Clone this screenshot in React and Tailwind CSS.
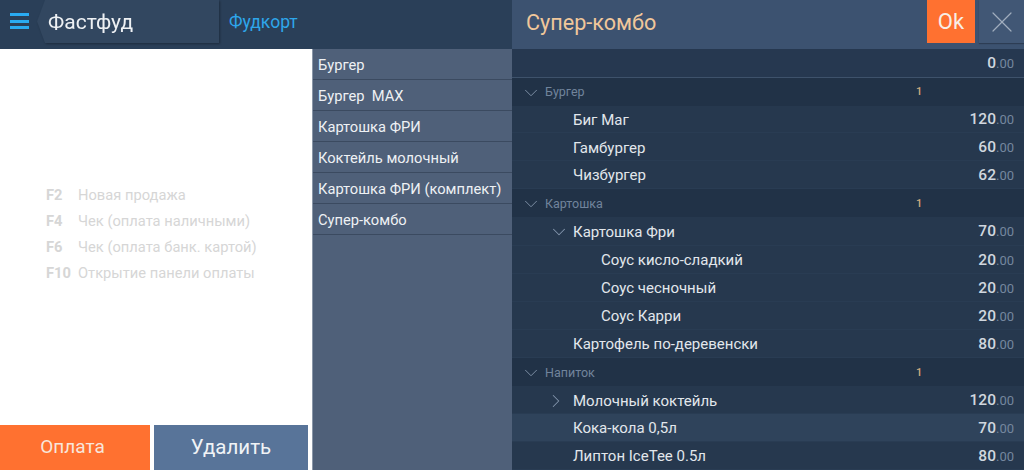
import { ChevronDown, ChevronRight, X } from 'lucide-react';

const categories = ['Бургер', 'Бургер  MAX', 'Картошка ФРИ', 'Коктейль молочный', 'Картошка ФРИ (комплект)', 'Супер-комбо'];

const hints = [
  ['F2', 'Новая продажа'],
  ['F4', 'Чек (оплата наличными)'],
  ['F6', 'Чек (оплата банк. картой)'],
  ['F10', 'Открытие панели оплаты'],
];

const rows = [
  { group: 'Бургер' },
  { name: 'Биг Маг', price: '120' },
  { name: 'Гамбургер', price: '60' },
  { name: 'Чизбургер', price: '62' },
  { group: 'Картошка' },
  { name: 'Картошка Фри', price: '70', icon: 'down', tall: true },
  { name: 'Соус кисло-сладкий', price: '20', sub: true },
  { name: 'Соус чесночный', price: '20', sub: true },
  { name: 'Соус Карри', price: '20', sub: true },
  { name: 'Картофель по-деревенски', price: '80', tall: true },
  { group: 'Напиток' },
  { name: 'Молочный коктейль', price: '120', icon: 'right' },
  { name: 'Кока-кола 0,5л', price: '70', active: true },
  { name: 'Липтон IceTee 0.5л', price: '80' },
];

const Price = ({ value }) => (
  <span className="ml-auto pr-[10px] text-[15.5px] font-medium text-[#d0d7df]">
    {value}
    <span className="text-[13px] font-normal text-[#75879e]">.00</span>
  </span>
);

const Row = ({ row }) => {
  if (row.group) {
    return (
      <div className="flex h-7 items-center bg-[#213247] pt-[2px] text-[12.5px] text-[#71849c]">
        <ChevronDown size={22} strokeWidth={1} className="ml-2 text-[#8395ab]" />
        <span className="ml-[3px] w-[371px]">{row.group}</span>
        <span className="text-[11px] font-medium text-[#d2ab7f]">1</span>
      </div>
    );
  }
  return (
    <div className={`flex items-center border-b border-[#293c53] pt-[2px] text-[15px] font-normal text-[#e2e7ec] ${row.tall ? 'h-[29px]' : 'h-7'} ${row.active ? 'bg-[#2f435b]' : 'bg-[#26384e]'}`}>
      {row.icon === 'down' && (
        <>
          <ChevronDown size={22} strokeWidth={1.1} className="ml-9 text-[#8395ab]" />
          <span className="ml-[3px]">{row.name}</span>
        </>
      )}
      {row.icon === 'right' && (
        <>
          <ChevronRight size={22} strokeWidth={1.1} className="ml-[33px] text-[#8395ab]" />
          <span className="ml-[6px]">{row.name}</span>
        </>
      )}
      {!row.icon && <span className={row.sub ? 'ml-[89px]' : 'ml-[61px]'}>{row.name}</span>}
      <Price value={row.price} />
    </div>
  );
};

export default function App() {
  return (
    <div className="flex h-[470px] w-[1024px] overflow-hidden bg-white font-['Roboto',sans-serif]">
      <div className="flex w-[512px] flex-col">
        <header className="flex h-[49px] bg-[#2a3f58]">
          <div className="ml-[10px] mt-[13px] flex h-[16px] w-[19px] flex-col justify-between">
            <span className="h-[3px] bg-[#29abf2]" />
            <span className="h-[3px] bg-[#29abf2]" />
            <span className="h-[3px] bg-[#29abf2]" />
          </div>
          <div className="ml-[8px] h-[43px] w-[182px] drop-shadow-[1px_1px_1px_rgba(0,0,0,0.3)]">
            <div className="flex h-full items-center bg-[#324760] pl-[11px] pt-[2px] text-[21px] text-[#eef1f4] [clip-path:polygon(8px_0,100%_0,100%_100%,8px_100%,0_50%)]">
              Фастфуд
            </div>
          </div>
          <div className="ml-[10px] flex h-[43px] items-center pt-px text-[17.5px] text-[#2ea6ea]">Фудкорт</div>
        </header>
        <div className="flex min-h-0 flex-1">
          <div className="flex w-[312px] flex-col bg-white">
            <div className="flex flex-1 flex-col pl-[46px] pt-[133px] text-[14.7px] text-[#d6d6d6]">
              {hints.map(([key, label]) => (
                <div key={key} className="flex h-[26px] items-center">
                  <span className="w-8 font-bold">{key}</span>
                  <span>{label}</span>
                </div>
              ))}
            </div>
            <div className="flex h-[45px] gap-1 pr-1">
              <button className="w-[150px] bg-[#ff7130] pr-[5px] text-[19px] text-[#f8e6da]">Оплата</button>
              <button className="w-[154px] bg-[#587499] text-[20.5px] text-[#f0f3f6]">Удалить</button>
            </div>
          </div>
          <nav className="w-[200px] border-l border-[#8a97a8] bg-[#4f6079]">
            {categories.map((name) => (
              <div key={name} className="flex h-[31px] items-center whitespace-pre border-b border-[#3b4a60] pl-[5px] pt-[2px] text-[14.7px] font-normal text-[#eef1f4]">
                {name}
              </div>
            ))}
          </nav>
        </div>
      </div>
      <div className="flex w-[512px] flex-col bg-[#233449]">
        <header className="flex h-[49px] items-start bg-[#3c5270]">
          <h1 className="ml-[14px] mt-[7px] text-[21.6px] font-normal text-[#f0c79b]">Супер-комбо</h1>
          <button className="ml-auto flex h-[43px] w-[48px] items-center justify-center bg-[#ff7130] text-[22px] text-[#f8eee6]">Ok</button>
          <div className="ml-1 flex h-[43px] w-[45px] items-center justify-center bg-[#415775] shadow-[0_1px_1px_rgba(0,0,0,0.25)]">
            <X size={36} strokeWidth={0.8} className="text-[#a0adbd]" />
          </div>
        </header>
        <div className="flex h-[29px] items-center border-b border-[#3e526b] bg-[#263850] pt-[2px]">
          <Price value="0" />
        </div>
        {rows.map((row) => (
          <Row key={row.group || row.name} row={row} />
        ))}
      </div>
    </div>
  );
}
